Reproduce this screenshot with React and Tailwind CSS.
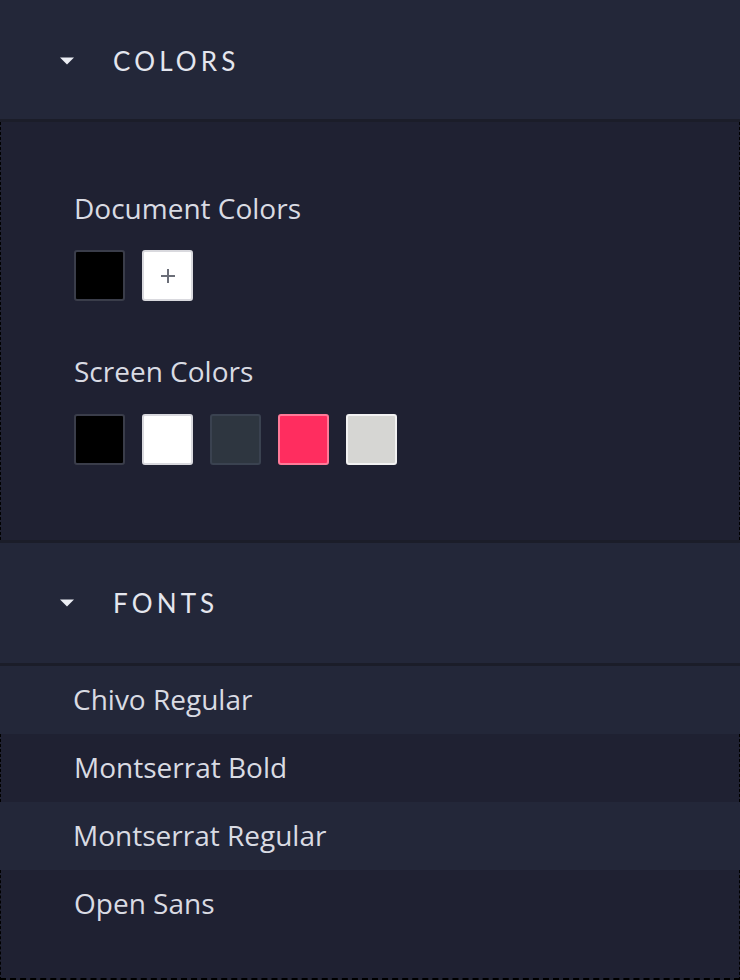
import React from 'react';

const documentColors = ['#000000'];
const screenColors = [
    { color: '#000000', border: 'border-[#3a3d4a]' },
    { color: '#ffffff', border: 'border-[#d9d9de]' },
    { color: '#2e3640', border: 'border-[#3a4250]' },
    { color: '#ff2d5f', border: 'border-[#ff7a98]' },
    { color: '#d6d6d3', border: 'border-[#f2f2f2]' },
];
const fonts = ['Chivo Regular', 'Montserrat Bold', 'Montserrat Regular', 'Open Sans'];

const Caret = () => (
    <svg width="16" height="8" viewBox="0 0 16 8" className="shrink-0">
        <path d="M1 0.5 L15 0.5 L8 7.5 Z" fill="#eceef4" />
    </svg>
);

// Section header bar (COLORS / FONTS)
const SectionHeader = ({ title, className }) => (
    <div className={'bg-[#232739] border-b-[3px] border-[#1b1d29] flex items-center pl-[59px] ' + className}>
        <Caret />
        <span
            className="ml-[38px] text-[26px] text-[#e4e6ee] uppercase tracking-[0.16em]"
            style={{ fontFamily: 'Lato, "Noto Sans", sans-serif' }}
        >
            {title}
        </span>
    </div>
);

const Swatch = ({ color, border }) => (
    <div
        className={`w-[51px] h-[51px] rounded-[3px] border-2 ${border}`}
        style={{ backgroundColor: color }}
    />
);

export default function App() {
    return (
        <div
            className="w-[740px] min-h-[980px] flex flex-col bg-[#1f2132] text-[#d9dbe3]"
            style={{ fontFamily: '"Open Sans", "Noto Sans", sans-serif' }}
        >
            <SectionHeader title="Colors" className="h-[122px] pt-[3px] border-b-2" />

            <div className="border-x border-dashed border-black bg-[#1f2132] px-[73px] pt-[70px] pb-[75px]">
                <div className="text-[28px] leading-[32px]">Document Colors</div>
                <div className="flex gap-[17px] mt-[26px]">
                    {documentColors.map(c => (
                        <Swatch key={c} color={c} border="border-[#3a3d4a]" />
                    ))}
                    <div className="w-[51px] h-[51px] rounded-[3px] border-2 border-[#d9d9de] bg-white flex items-center justify-center">
                        <svg width="18" height="18" viewBox="0 0 18 18">
                            <path d="M9 2 V16 M2 9 H16" stroke="#6b6e78" strokeWidth="2" />
                        </svg>
                    </div>
                </div>

                <div className="text-[28px] leading-[32px] mt-[54px]">Screen Colors</div>
                <div className="flex gap-[17px] mt-[27px]">
                    {screenColors.map((s, i) => (
                        <Swatch key={i} color={s.color} border={s.border} />
                    ))}
                </div>
            </div>

            <div className="h-[3px] bg-[#1b1d29]" />
            <SectionHeader title="Fonts" className="h-[123px]" />

            <div className="flex flex-col flex-1">
                {fonts.map((f, i) => {
                    const last = i === fonts.length - 1;
                    const dark = i % 2 === 1;
                    return (
                        <div
                            key={f}
                            className={
                                'px-[73px] text-[28px] ' +
                                (dark ? 'bg-[#1f2132] border-x border-dashed border-black ' : 'bg-[#232739] ') +
                                (last ? 'flex-1 border-b-2 border-b-black leading-[66px]' : 'h-[68px] leading-[66px]')
                            }
                        >
                            {f}
                        </div>
                    );
                })}
            </div>
        </div>
    );
}
